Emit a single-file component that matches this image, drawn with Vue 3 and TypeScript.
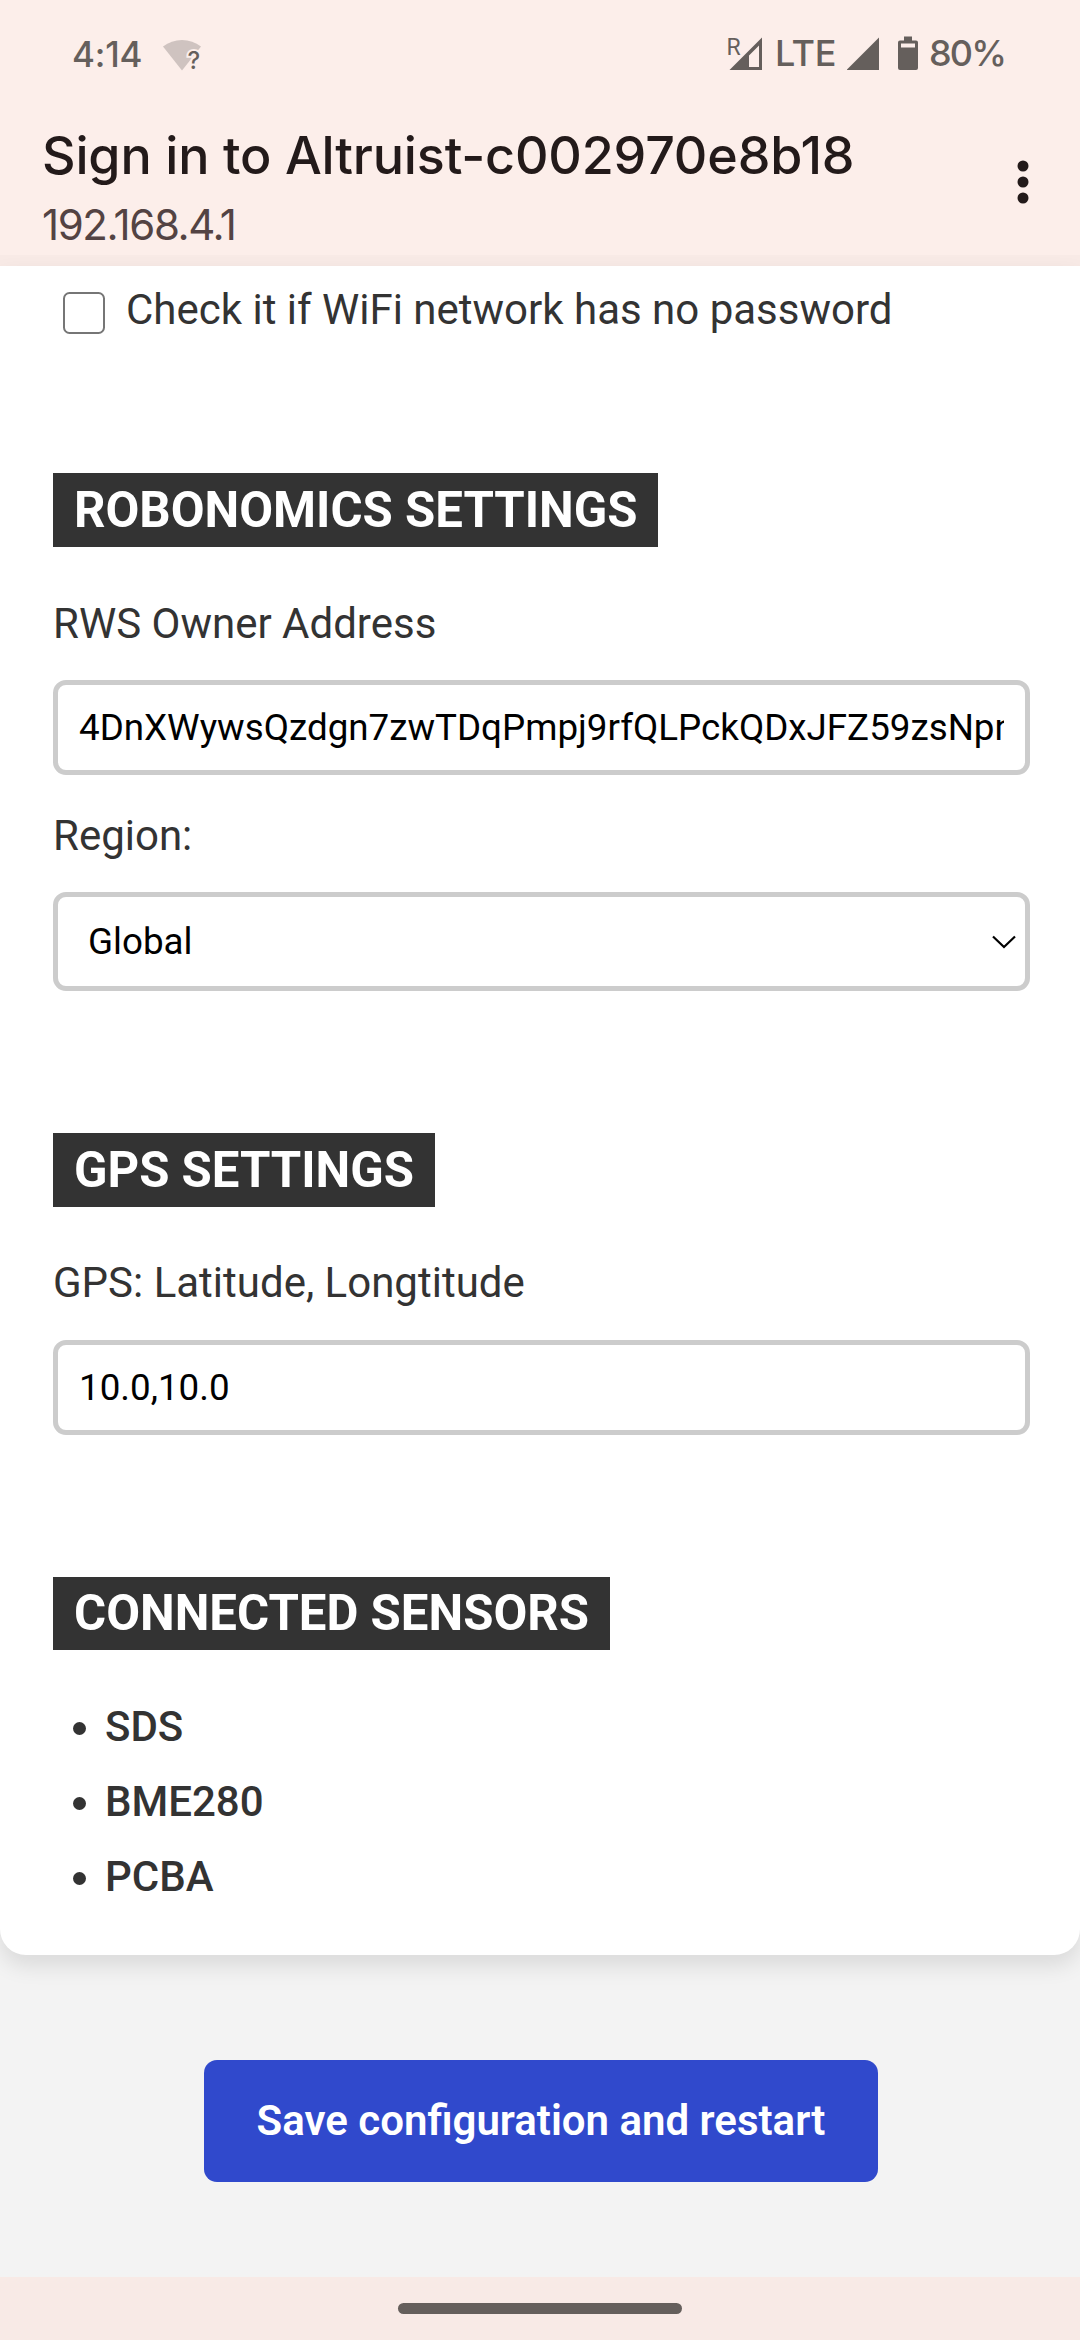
<script setup lang="ts">
import { ref } from 'vue'

const networkName = 'Altruist-c002970e8b18'
const host = '192.168.4.1'

const openNetwork = ref(false)
const ownerAddress = ref('4DnXWywsQzdgn7zwTDqPmpj9rfQLPckQDxJFZ59zsNpn')
const region = ref('Global')
const regions: string[] = ['Global']
const gps = ref('10.0,10.0')
const sensors: string[] = ['SDS', 'BME280', 'PCBA']
</script>

<template>
  <div class="screen">
    <header class="top">
      <div class="status">
        <div class="status-left">
          <span class="time">4:14</span>
          <svg class="wifi" width="40" height="32" viewBox="0 0 40 32">
            <path class="faint" d="M0 7.5C5.5 3.2 12 1 19 1s13.500 2.200 19 6.500L19 31.500Z" />
            <text class="mark" x="24.500" y="30">?</text>
          </svg>
        </div>
        <div class="status-right">
          <svg class="roaming" width="47" height="36" viewBox="0 0 47 36">
            <text class="r" x="-1.500" y="18.500">R</text>
            <path fill-rule="evenodd" d="M1.500 34 34 1.500V34ZM21 19.500V31H31V9.500Z" />
          </svg>
          <span class="lte">LTE</span>
          <svg class="signal" width="51" height="36" viewBox="0 0 51 36">
            <path d="M-.5 34 32 1.500V34Z" />
          </svg>
          <svg class="battery" width="31" height="36" viewBox="0 0 31 36">
            <path
              fill-rule="evenodd"
              d="M6 .5H14V4.500H18a2 2 0 0 1 2 2V32a2 2 0 0 1-2 2H2a2 2 0 0 1-2-2V6.500a2 2 0 0 1 2-2H6ZM3 7.500V11.500H17V7.500Z"
            />
          </svg>
          <span class="percent">80%</span>
        </div>
      </div>
      <div class="bar">
        <div class="titles">
          <div class="title">Sign in to {{ networkName }}</div>
          <div class="host">{{ host }}</div>
        </div>
        <svg class="more" width="12" height="44" viewBox="0 0 12 44">
          <circle cx="6" cy="6" r="5.500" />
          <circle cx="6" cy="22" r="5.500" />
          <circle cx="6" cy="38" r="5.500" />
        </svg>
      </div>
    </header>

    <main class="page">
      <section class="card">
        <label class="check">
          <input v-model="openNetwork" type="checkbox" class="box" />
          <span>Check it if WiFi network has no password</span>
        </label>

        <h3>ROBONOMICS SETTINGS</h3>
        <label class="label first" for="owner">RWS Owner Address</label>
        <input id="owner" v-model="ownerAddress" class="field" type="text" spellcheck="false" />
        <label class="label second" for="region">Region:</label>
        <div class="select-wrap">
          <select id="region" v-model="region" class="field select">
            <option v-for="r in regions" :key="r" :value="r">{{ r }}</option>
          </select>
          <svg class="chevron" width="24" height="14" viewBox="0 0 24 14">
            <path d="M1 1.500 12 12 23 1.500" />
          </svg>
        </div>

        <h3>GPS SETTINGS</h3>
        <label class="label" for="gps">GPS: Latitude, Longtitude</label>
        <input id="gps" v-model="gps" class="field" type="text" />

        <h3 class="short">CONNECTED SENSORS</h3>
        <ul class="sensors">
          <li v-for="s in sensors" :key="s">{{ s }}</li>
        </ul>
      </section>

      <button class="save" type="button">Save configuration and restart</button>
    </main>

    <footer class="nav"><span class="pill"></span></footer>
  </div>
</template>

<style>
body {
  margin: 0;
}
</style>

<style scoped>
.screen {
  display: flex;
  flex-direction: column;
  width: 1080px;
  height: 2340px;
  overflow: hidden;
  background: #f3f3f3;
  color: #333;
  font: 400 42px/50px Roboto, sans-serif;
}

.screen *,
.screen *::before {
  box-sizing: border-box;
}

svg {
  display: block;
  flex: none;
}

/* System bar and title bar */
.top {
  flex: none;
  height: 266px;
  border-bottom: 11px solid #f8eae6;
  background: #fceeea;
  font-family: Inter, sans-serif;
}

.status {
  display: flex;
  justify-content: space-between;
  height: 126px;
  padding: 29px 72px 0;
  color: #655f5c;
  font-size: 36px;
  font-weight: 500;
  line-height: 48px;
}

.status-left,
.status-right {
  display: flex;
}

.status-right {
  width: 280px;
}

.status svg {
  margin-top: 7px;
  fill: #655f5c;
}

.time {
  width: 91px;
  padding-top: 1px;
  font-size: 35px;
  letter-spacing: -0.2px;
}

.status .wifi {
  margin-top: 10px;
  overflow: visible;
}

.wifi .faint {
  fill: #cfc3c0;
}

.mark {
  font-size: 24px;
  font-weight: 500;
  paint-order: stroke;
  stroke: #fceeea;
  stroke-width: 4px;
}

.roaming {
  overflow: visible;
}

.r {
  font: 400 23px Roboto, sans-serif;
}

.lte {
  width: 72px;
  letter-spacing: -0.4px;
}

.percent {
  letter-spacing: -1.8px;
}

.bar {
  display: flex;
  justify-content: space-between;
  padding: 0 51px 0 42px;
}

.title {
  height: 74px;
  color: #231a1a;
  font-size: 52px;
  font-weight: 500;
  letter-spacing: -0.17px;
  line-height: 60px;
  white-space: nowrap;
}

.host {
  color: #534343;
  letter-spacing: -1.4px;
}

.more {
  margin-top: 34px;
  fill: #231a1a;
}

/* Configuration form */
.page {
  display: flex;
  flex: 1;
  flex-direction: column;
  align-items: center;
}

.card {
  display: flex;
  flex-direction: column;
  align-items: flex-start;
  width: 1080px;
  height: 1689px;
  padding: 19px 50px 0 53px;
  border-radius: 0 0 26px 26px;
  background: #fff;
  box-shadow: 0 10.5px 21px rgba(0, 0, 0, 0.1);
}

.check {
  display: flex;
  align-items: flex-start;
  padding-left: 10px;
}

.box {
  width: 42px;
  height: 42px;
  margin: 7px 21px 0 0;
  border: 2.6px solid #767676;
  border-radius: 6.5px;
  background: #fff;
  appearance: none;
}

h3 {
  margin: 142px 0 51px;
  padding: 8px 21px;
  background: #333;
  color: #fff;
  font-size: 49.14px;
  font-weight: 700;
  line-height: 58px;
}

.check + h3 {
  margin-top: 138px;
}

h3.short {
  padding: 7px 21px 8px;
}

.label {
  margin-bottom: 32px;
}

.label.first {
  margin: 1px 0 31px;
}

.label.second {
  margin: 36px 0 31px;
}

.field {
  width: 977px;
  height: 95px;
  margin: 0;
  padding: 0 21px;
  border: 5px solid #ccc;
  border-radius: 13px;
  outline: none;
  background: #fff;
  color: #000;
  font: 400 36.75px Roboto, sans-serif;
}

.select-wrap {
  position: relative;
}

.select {
  display: block;
  height: 99px;
  padding-left: 30px;
  appearance: none;
}

/* Dropdown arrow drawn over the select control */
.chevron {
  position: absolute;
  top: 43px;
  right: 14px;
  fill: none;
  stroke: #000;
  stroke-width: 2.2px;
  pointer-events: none;
}

.sensors {
  display: flex;
  flex-direction: column;
  margin: -12px 0 0;
  padding: 0;
  list-style: none;
  font-weight: 500;
  line-height: 75px;
}

.sensors li {
  display: flex;
  align-items: center;
  height: 75px;
}

.sensors li::before {
  width: 13px;
  height: 13px;
  margin: 4px 19px 0 20px;
  border-radius: 50%;
  background: #333;
  content: '';
}

.save {
  width: 674px;
  height: 122px;
  margin: 105px 0 0 2px;
  padding: 0;
  border: 0;
  border-radius: 13px;
  background: #3049cc;
  color: #fff;
  font: 600 42px/50px Roboto, sans-serif;
}

/* Gesture navigation area */
.nav {
  display: flex;
  flex: none;
  justify-content: center;
  height: 63px;
  padding-top: 26px;
  background: #f8eae6;
}

.pill {
  width: 284px;
  height: 11px;
  border-radius: 5.5px;
  background: #655f5c;
}
</style>
